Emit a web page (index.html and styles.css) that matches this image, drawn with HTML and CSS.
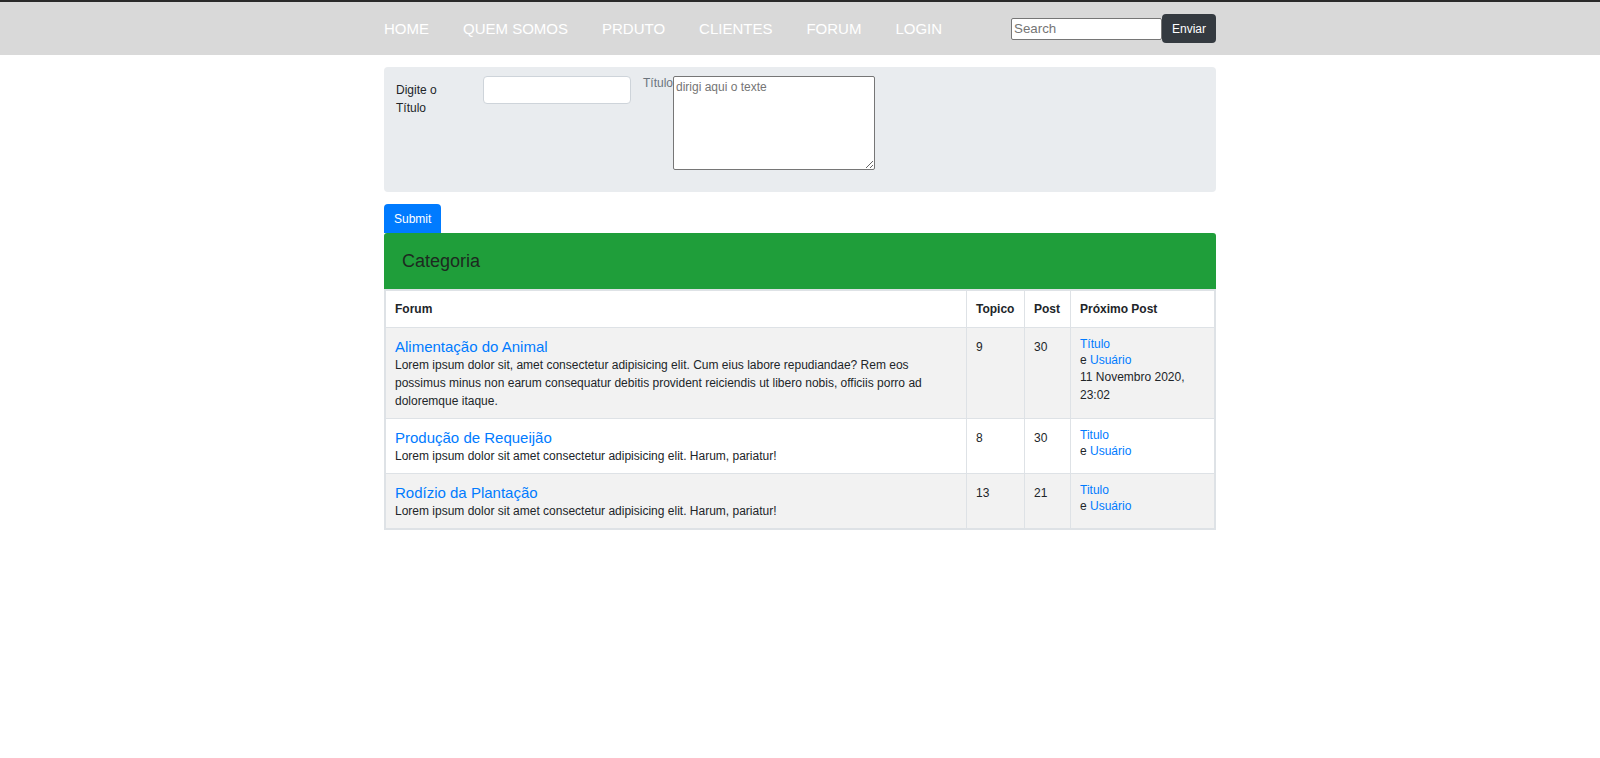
FILE: index.html
```html
<!DOCTYPE html>
<html lang="pt-br">
<head>
<meta charset="utf-8">
<title>Forum</title>
<link rel="stylesheet" href="styles.css">
</head>
<body>
<header class="topbar">
  <div class="container topbar-inner">
    <nav class="menu">
      <a href="#">HOME</a>
      <a href="#">QUEM SOMOS</a>
      <a href="#">PRDUTO</a>
      <a href="#">CLIENTES</a>
      <a href="#">FORUM</a>
      <a href="#">LOGIN</a>
    </nav>
    <form class="search">
      <input class="search-input" type="text" placeholder="Search">
      <button class="search-btn" type="button">Enviar</button>
    </form>
  </div>
</header>
<main class="container">
  <form class="post-box">
    <label class="post-label">Digite o Título</label>
    <input class="post-input" type="text">
    <span class="post-hint">Título</span>
    <textarea class="post-text" placeholder="dirigi aqui o texte"></textarea>
  </form>
  <button class="submit" type="button">Submit</button>
  <div class="cat-header">Categoria</div>
  <div class="table-wrap">
    <table class="forum">
      <thead>
        <tr>
          <th>Forum</th>
          <th class="c-top">Topico</th>
          <th class="c-post">Post</th>
          <th class="c-next">Próximo Post</th>
        </tr>
      </thead>
      <tbody>
        <tr>
          <td>
            <a class="topic" href="#">Alimentação do Animal</a>
            <p class="desc">Lorem ipsum dolor sit, amet consectetur adipisicing elit. Cum eius labore repudiandae? Rem eos possimus minus non earum consequatur debitis provident reiciendis ut libero nobis, officiis porro ad doloremque itaque.</p>
          </td>
          <td>9</td>
          <td>30</td>
          <td class="next">
            <a class="line" href="#">Título</a>
            <span class="line">e <a href="#">Usuário</a></span>
            <span class="date">11 Novembro 2020, 23:02</span>
          </td>
        </tr>
        <tr>
          <td>
            <a class="topic" href="#">Produção de Requeijão</a>
            <p class="desc">Lorem ipsum dolor sit amet consectetur adipisicing elit. Harum, pariatur!</p>
          </td>
          <td>8</td>
          <td>30</td>
          <td class="next">
            <a class="line" href="#">Titulo</a>
            <span class="line">e <a href="#">Usuário</a></span>
          </td>
        </tr>
        <tr>
          <td>
            <a class="topic" href="#">Rodízio da Plantação</a>
            <p class="desc">Lorem ipsum dolor sit amet consectetur adipisicing elit. Harum, pariatur!</p>
          </td>
          <td>13</td>
          <td>21</td>
          <td class="next">
            <a class="line" href="#">Titulo</a>
            <span class="line">e <a href="#">Usuário</a></span>
          </td>
        </tr>
      </tbody>
    </table>
  </div>
</main>
</body>
</html>
```

FILE: styles.css
```css
* {
  box-sizing: border-box;
}

body {
  margin: 0;
  font-family: "Liberation Sans", Arial, sans-serif;
  font-size: 12px;
  line-height: 18px;
  color: #212529;
  background: #fff;
}

a {
  color: #007bff;
  text-decoration: none;
}

.container {
  width: 832px;
  margin: 0 auto;
}

/* top bar */
.topbar {
  background: #d9d9d9;
  border-top: 2px solid #2a2a2a;
  height: 55px;
}

.topbar-inner {
  height: 100%;
  display: flex;
  align-items: center;
  justify-content: space-between;
}

.menu {
  display: flex;
  gap: 34px;
}

.menu a {
  color: #fff;
  font-size: 15px;
  line-height: 18px;
}

.search {
  display: flex;
  align-items: center;
}

.search-input {
  width: 151px;
  height: 22px;
  padding: 1px 2px;
  border: 1px solid #767676;
  border-radius: 2px;
  font-family: "Liberation Sans", Arial, sans-serif;
  font-size: 13.33px;
  color: #212529;
  background: #fff;
}

.search-input::placeholder {
  color: #757575;
}

.search-btn {
  width: 54px;
  height: 29px;
  padding: 0;
  border: none;
  border-radius: 4px;
  background: #343a40;
  color: #fff;
  font-family: "Liberation Sans", Arial, sans-serif;
  font-size: 12px;
}

/* post form */
.post-box {
  margin-top: 12px;
  background: #e9ecef;
  border-radius: 4px;
  padding: 9px 12px 22px;
  display: flex;
  align-items: flex-start;
}

.post-label {
  width: 60px;
  margin-right: 27px;
  padding-top: 5px;
}

.post-input {
  width: 148px;
  height: 28px;
  border: 1px solid #ced4da;
  border-radius: 4px;
  background: #fff;
}

.post-hint {
  margin-left: 12px;
  color: #6c757d;
  line-height: normal;
}

.post-text {
  width: 202px;
  height: 94px;
  padding: 2px;
  border: 1px solid #767676;
  border-radius: 2px;
  font-family: "Liberation Sans", Arial, sans-serif;
  font-size: 12px;
  line-height: 16px;
  background: #fff;
}

.post-text::placeholder {
  color: #757575;
}

.submit {
  display: block;
  margin-top: 12px;
  height: 29px;
  padding: 0 10px;
  border: none;
  border-radius: 4px 4px 0 0;
  background: #007bff;
  color: #fff;
  font-family: "Liberation Sans", Arial, sans-serif;
  font-size: 12px;
}

.cat-header {
  height: 56px;
  display: flex;
  align-items: center;
  padding-left: 18px;
  background: #1f9e3a;
  color: #1d2a20;
  font-size: 18px;
  border-radius: 3px 3px 0 0;
}

/* table */
.table-wrap {
  border: 1px solid #dee2e6;
}

.forum {
  width: 100%;
  table-layout: fixed;
  border-collapse: separate;
  border-spacing: 0;
  border: 1px solid #dee2e6;
}

.forum th,
.forum td {
  padding: 10px 9px 8px;
  text-align: left;
  vertical-align: top;
  border-left: 1px solid #dee2e6;
  border-top: 1px solid #dee2e6;
}

.forum th {
  padding: 9px 9px 9px;
}

.forum th:first-child,
.forum td:first-child {
  border-left: none;
}

.forum thead th {
  border-top: none;
  font-weight: bold;
  background: #fff;
}

.forum td.next {
  padding-top: 8px;
}

.forum .c-top {
  width: 58px;
}

.forum .c-post {
  width: 46px;
}

.forum .c-next {
  width: 144px;
}

.forum tbody tr:nth-child(odd) {
  background: #f2f2f2;
}

.topic {
  display: block;
  font-size: 15px;
  line-height: 18px;
}

.desc {
  margin: 0;
}

.line {
  display: block;
  line-height: 16px;
}

.date {
  display: block;
}
```
